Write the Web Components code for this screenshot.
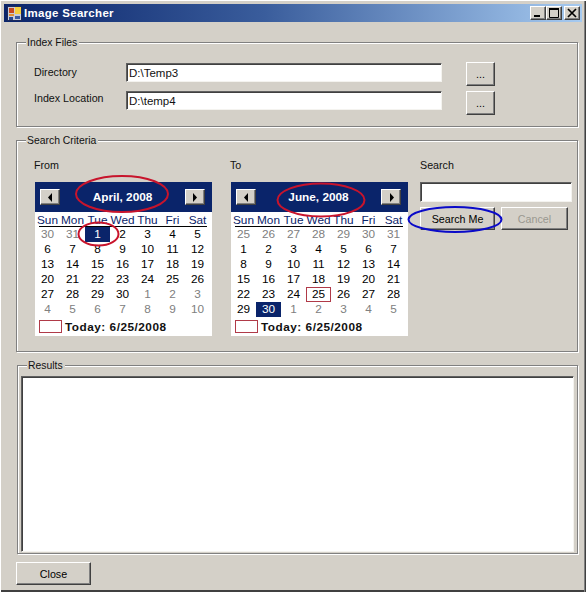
<!DOCTYPE html>
<html>
<head>
<meta charset="utf-8">
<title>Image Searcher</title>
<style>
html, body { margin: 0; padding: 0; background: #d4d0c8; }
body { font: 11px "Liberation Sans", Arial, sans-serif; color: #000; }
</style>
</head>
<body>
<image-searcher></image-searcher>

<script>
const raised = `
    background: #d4d0c8;
    border: 1px solid;
    border-color: #fff #404040 #404040 #fff;
    box-shadow: inset -1px -1px 0 #808080;
`;

class WinButton extends HTMLElement {
    constructor() {
        super();
        this.attachShadow({ mode: 'open' });
        this.shadowRoot.innerHTML = `
<style>
:host {
    display: block;
    box-sizing: border-box;
    ${raised}
    font: 10.700px "Liberation Sans", Arial, sans-serif;
    text-align: center;
    color: #000;
}
:host([disabled]) {
    color: #9a9890;
}
.inner {
    display: flex;
    align-items: center;
    justify-content: center;
    height: 100%;
}
</style>
<div class="inner"><slot></slot></div>`;
    }
}
customElements.define('win-button', WinButton);

class WinInput extends HTMLElement {
    constructor() {
        super();
        this.attachShadow({ mode: 'open' });
        this.shadowRoot.innerHTML = `
<style>
:host {
    display: block;
    box-sizing: border-box;
    background: #fff;
    border: 1px solid;
    border-color: #606060 #f4f3ef #f4f3ef #606060;
    box-shadow: inset 1px 1px 0 #404040;
    padding: 0 0 0 2px;
    font: 11.500px "Liberation Sans", Arial, sans-serif;
    color: #111;
    white-space: nowrap;
    overflow: hidden;
}
.inner {
    display: flex;
    align-items: center;
    height: 100%;
}
</style>
<div class="inner"><slot></slot></div>`;
    }
}
customElements.define('win-input', WinInput);

class GroupBox extends HTMLElement {
    static get observedAttributes() { return ['label']; }
    constructor() {
        super();
        this.attachShadow({ mode: 'open' });
        this.shadowRoot.innerHTML = `
<style>
:host {
    display: block;
    position: relative;
    box-sizing: border-box;
    border: 1px solid #808080;
    box-shadow: 1px 1px 0 #fff, inset 1px 1px 0 #fff;
}
.legend {
    position: absolute;
    left: 9px;
    top: -7px;
    padding: 0 2px 0 1px;
    background: #d4d0c8;
    font: 10.400px/14px "Liberation Sans", Arial, sans-serif;
    color: #111;
}
</style>
<div class="legend"></div>
<slot></slot>`;
    }
    attributeChangedCallback() {
        this.shadowRoot.querySelector('.legend').textContent = this.getAttribute('label');
    }
}
customElements.define('group-box', GroupBox);

class TitleBar extends HTMLElement {
    constructor() {
        super();
        this.attachShadow({ mode: 'open' });
        this.shadowRoot.innerHTML = `
<style>
:host {
    display: flex;
    align-items: center;
    height: 18px;
    padding: 0 2px 0 3px;
    background: linear-gradient(90deg, #0a246a 0%, #3a5d9c 45%, #a6caf0 100%);
    color: #fff;
    font: bold 11.500px "Liberation Sans", Arial, sans-serif;
}
svg.app { margin-right: 2px; flex: none; }
.title { flex: 1; letter-spacing: 0.3px; }
.controls { display: flex; }
.ctl {
    box-sizing: border-box;
    width: 16px;
    height: 14px;
    ${raised}
    display: flex;
    align-items: center;
    justify-content: center;
}
.ctl.last { margin-left: 2px; }
</style>
<svg class="app" width="15" height="15" viewBox="0 0 15 15">
    <rect x="0.500" y="0.500" width="14" height="14" fill="#c8ccd8" stroke="#1c2a5c"/>
    <rect x="2" y="2" width="5" height="5" fill="#c84a20"/>
    <rect x="8" y="1" width="6" height="7" fill="#f4d040"/>
    <rect x="2" y="8" width="5" height="2" fill="#e09030"/>
    <rect x="2" y="11" width="4" height="3" fill="#2a4a90"/>
    <rect x="8" y="10" width="5" height="3" fill="#3a5aa0"/>
</svg>
<span class="title"><slot></slot></span>
<div class="controls">
    <div class="ctl"><svg width="12" height="10" viewBox="0 0 12 10"><rect x="2" y="7" width="6" height="2" fill="#000"/></svg></div>
    <div class="ctl"><svg width="12" height="10" viewBox="0 0 12 10"><path d="M1.500 1.500h9v8h-9z" fill="none" stroke="#000"/><rect x="1" y="0" width="10" height="2" fill="#000"/></svg></div>
    <div class="ctl last"><svg width="10" height="10" viewBox="0 0 10 10"><path d="M1 1l8 8M9 1l-8 8" stroke="#000" stroke-width="1.700" fill="none"/></svg></div>
</div>`;
    }
}
customElements.define('title-bar', TitleBar);

class MonthCalendar extends HTMLElement {
    connectedCallback() {
        if (this.shadowRoot) return;
        this.attachShadow({ mode: 'open' });
        const year = +this.getAttribute('year');
        const month = +this.getAttribute('month');
        const selected = +this.getAttribute('selected');
        const boxed = +this.getAttribute('boxed');
        const names = ['January', 'February', 'March', 'April', 'May', 'June'];
        const first = new Date(year, month - 1, 1);
        // the control always keeps a row of the previous month, even when the 1st is a Sunday
        const lead = first.getDay() || 7;
        let cells = '';
        for (let i = 0; i < 42; i++) {
            const d = new Date(year, month - 1, 1 - lead + i);
            const inMonth = d.getMonth() === month - 1;
            const cls = [];
            if (!inMonth) cls.push('other');
            if (inMonth && d.getDate() === selected) cls.push('sel');
            if (inMonth && d.getDate() === boxed) cls.push('box');
            cells += `<div class="${cls.join(' ')}">${d.getDate()}</div>`;
        }
        const days = ['Sun', 'Mon', 'Tue', 'Wed', 'Thu', 'Fri', 'Sat']
            .map(n => `<div>${n}</div>`).join('');
        this.shadowRoot.innerHTML = `
<style>
:host {
    display: block;
    width: 177px;
    height: 154px;
    background: #fff;
    font: 11.800px "Liberation Sans", Arial, sans-serif;
    color: #000;
}
.head {
    height: 30px;
    box-sizing: border-box;
    padding: 0 7px 0 5px;
    background: #0a246a;
    color: #fff;
    display: flex;
    align-items: center;
    justify-content: space-between;
    font-weight: bold;
}
.nav {
    box-sizing: border-box;
    width: 20px;
    height: 16px;
    ${raised}
    display: flex;
    align-items: center;
    justify-content: center;
}
.days, .grid {
    display: grid;
    grid-template-columns: repeat(7, 25px);
    text-align: center;
}
.days {
    height: 14px;
    line-height: 17px;
    color: #0a246a;
}
.rule {
    height: 1px;
    margin: 0 5px 0 4px;
    background: #000;
}
.grid > div {
    box-sizing: border-box;
    height: 15px;
    line-height: 15px;
}
.grid .other { color: #808080; }
.grid .sel { background: #0a246a; color: #fff; }
.grid .box { border: 1px solid #b03a48; line-height: 13px; }
.today {
    display: flex;
    align-items: center;
    height: 13px;
    margin-top: 3px;
    padding-left: 4px;
    font-weight: bold;
    letter-spacing: 0.5px;
    color: #111;
}
.today i {
    display: block;
    box-sizing: border-box;
    width: 23px;
    height: 13px;
    margin-right: 3px;
    border: 1px solid #b03a48;
}
</style>
<div class="head">
    <div class="nav"><svg width="5" height="9" viewBox="0 0 5 9"><path d="M4 0v9L0 4.500z" fill="#000"/></svg></div>
    <div>${names[month - 1]}, ${year}</div>
    <div class="nav"><svg width="5" height="9" viewBox="0 0 5 9"><path d="M1 0v9l4-4.500z" fill="#000"/></svg></div>
</div>
<div class="days">${days}</div>
<div class="rule"></div>
<div class="grid">${cells}</div>
<div class="today"><i></i>Today: 6/25/2008</div>`;
    }
}
customElements.define('month-calendar', MonthCalendar);

class ImageSearcher extends HTMLElement {
    constructor() {
        super();
        this.attachShadow({ mode: 'open' });
        this.shadowRoot.innerHTML = `
<style>
:host {
    display: block;
    position: relative;
    box-sizing: border-box;
    width: 586px;
    height: 592px;
    overflow: hidden;
    padding: 4px 4px 0 4px;
    background: #d4d0c8;
    font: 10.700px "Liberation Sans", Arial, sans-serif;
    color: #111;
    box-shadow: inset 1px 1px 0 #fff, inset -1px 0 0 #404040, inset -2px 0 0 #808080, inset 0 -2px 0 #404040;
}
main {
    padding: 20px 4px 0 12px;
}
.index {
    height: 83px;
    box-sizing: border-box;
    padding: 19px 0 0 109px;
    display: grid;
    grid-template-columns: 316px 29px;
    grid-template-rows: 24px 24px;
    column-gap: 24px;
    row-gap: 5px;
    position: relative;
}
.index win-input { height: 19px; }
.index .lbl { position: absolute; left: 17px; }
.criteria { margin-top: 13px; }
.search {
    height: 210px;
    box-sizing: border-box;
    padding: 18px 0 0 18px;
    display: flex;
}
.col { width: 196px; flex: none; }
.col label, .side label { display: block; height: 23px; line-height: 13px; }
.col label { margin-left: -1px; }
.side { width: 152px; }
.side win-input { height: 20px; }
.actions { display: flex; gap: 6px; margin-top: 5px; }
.actions win-button { height: 23px; }
.results {
    margin-top: 13px;
    margin-left: 1px;
    height: 189px;
    padding: 10px 3px 1px 3px;
}
.results win-input { height: 100%; }
.close { margin-top: 8px; width: 75px; height: 23px; }
.marks {
    position: absolute;
    left: 0;
    top: 0;
    pointer-events: none;
}
</style>
<title-bar>Image Searcher</title-bar>
<main>
    <group-box label="Index Files">
        <div class="index">
            <span class="lbl" style="top:23px">Directory</span>
            <span class="lbl" style="top:49px">Index Location</span>
            <win-input style="margin-top:1px">D:\\Temp3</win-input>
            <win-button>...</win-button>
            <win-input>D:\\temp4</win-input>
            <win-button>...</win-button>
        </div>
    </group-box>
    <group-box class="criteria" label="Search Criteria">
        <div class="search">
            <div class="col">
                <label>From</label>
                <month-calendar year="2008" month="4" selected="1"></month-calendar>
            </div>
            <div class="col" style="width:189px">
                <label>To</label>
                <month-calendar year="2008" month="6" selected="30" boxed="25"></month-calendar>
            </div>
            <div class="side">
                <label>Search</label>
                <win-input></win-input>
                <div class="actions">
                    <win-button style="width:75px">Search Me</win-button>
                    <win-button style="width:67px" disabled>Cancel</win-button>
                </div>
            </div>
        </div>
    </group-box>
    <group-box class="results" label="Results">
        <win-input></win-input>
    </group-box>
    <win-button class="close">Close</win-button>
</main>
<svg class="marks" width="586" height="592" fill="none" stroke-width="2">
    <ellipse cx="122" cy="194" rx="46" ry="18" stroke="#c8142c"/>
    <ellipse cx="98.500" cy="234" rx="20" ry="11.500" stroke="#c8142c"/>
    <ellipse cx="321" cy="200" rx="43.500" ry="16.500" stroke="#c8142c"/>
    <ellipse cx="455" cy="219.500" rx="46.500" ry="12.500" stroke="#0a0ac8"/>
</svg>`;
    }
}
customElements.define('image-searcher', ImageSearcher);
</script>
</body>
</html>
